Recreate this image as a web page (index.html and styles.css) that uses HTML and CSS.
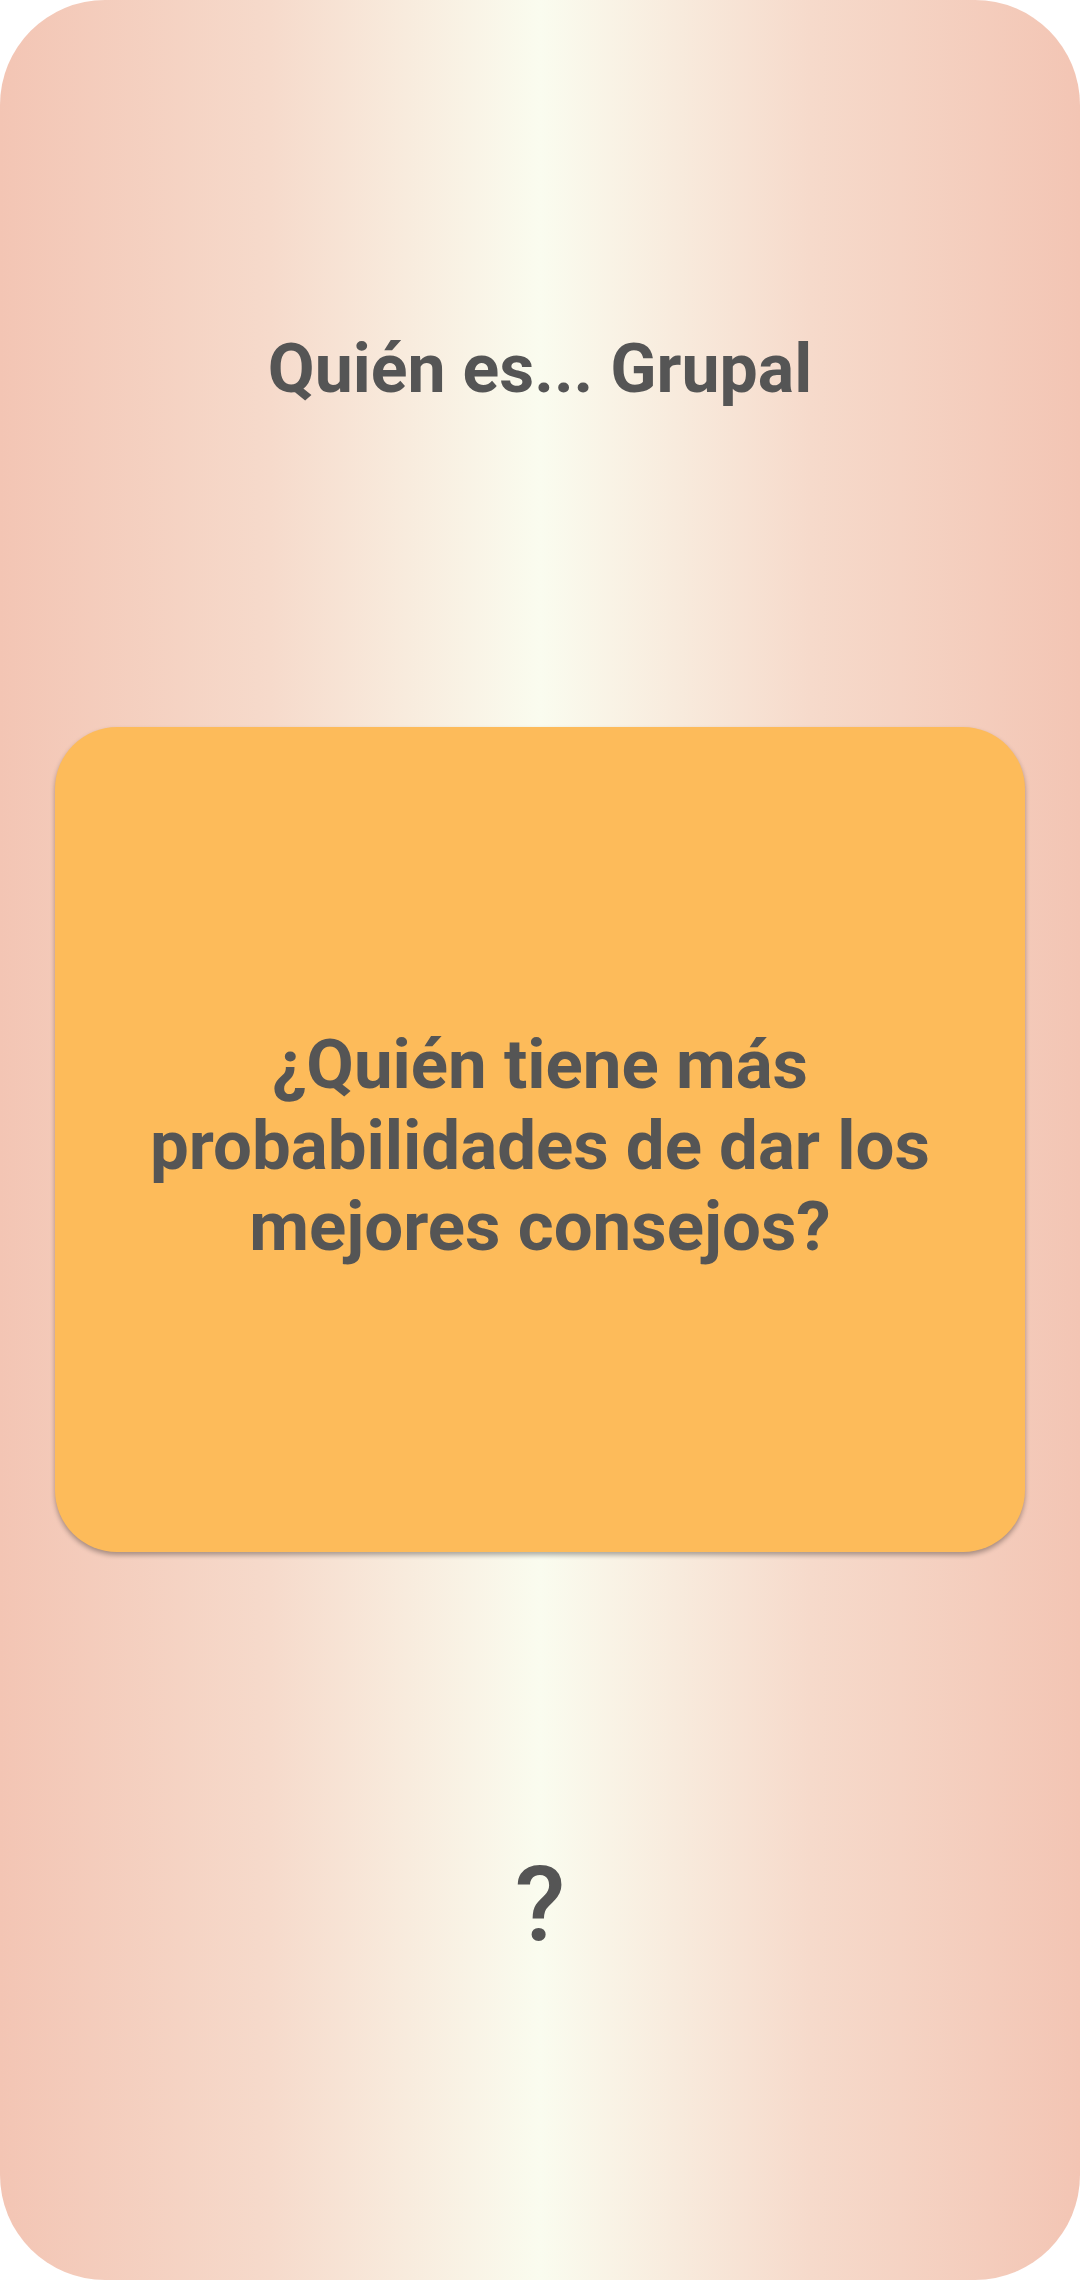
FILE: index.html
```html
<!DOCTYPE html>
<html lang="es">
<head>
<meta charset="utf-8">
<title>Quién es... Grupal</title>
<link rel="stylesheet" href="styles.css">
</head>
<body>
<main class="screen">
  <h1 class="title">Quién es... Grupal</h1>
  <section class="card">
    <p class="question">¿Quién tiene más probabilidades de dar los mejores consejos?</p>
  </section>
  <div class="mark">?</div>
</main>
</body>
</html>
```

FILE: styles.css
```css
html, body {
  margin: 0;
  padding: 0;
  background: #ffffff;
}

.screen {
  box-sizing: border-box;
  width: 1080px;
  height: 2280px;
  border-radius: 105px;
  overflow: hidden;
  background: linear-gradient(to right, #f3c5b4 0%, #f6dacb 25%, #fafcef 50%, #f6dacb 75%, #f3c5b4 100%);
  display: flex;
  flex-direction: column;
  align-items: center;
  padding-top: 329px;
  font-family: Roboto, "Liberation Sans", sans-serif;
  color: #555555;
}

.title {
  margin: 0;
  font-size: 68px;
  line-height: 80px;
  font-weight: 700;
  text-align: center;
}

.card {
  box-sizing: border-box;
  margin-top: 318px;
  width: 970px;
  height: 825px;
  background: #fdbb5a;
  border-radius: 62px;
  box-shadow: 0 3px 5px rgba(0, 0, 0, 0.32);
  display: flex;
  align-items: center;
  justify-content: center;
  padding: 12px 60px 0;
}

.question {
  margin: 0;
  font-size: 69px;
  line-height: 81px;
  font-weight: 700;
  text-align: center;
}

.mark {
  margin-top: 301px;
  font-size: 104px;
  line-height: 104px;
  font-weight: 500;
}
```
